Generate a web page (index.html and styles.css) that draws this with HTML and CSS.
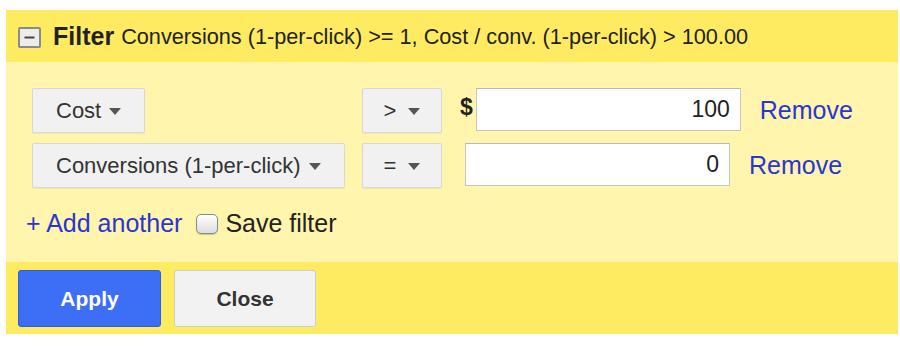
FILE: index.html
```html
<!DOCTYPE html>
<html lang="en">
<head>
    <meta charset="UTF-8">
    <meta name="viewport" content="width=device-width, initial-scale=1.0">
    <title>Filter</title>
    <link rel="stylesheet" href="styles.css">
</head>
<body>
    <div class="panel">
        <div class="panel-head">
            <span class="toggle">
                <svg width="23" height="21" viewBox="0 0 23 21">
                    <rect x="1" y="1" width="21" height="19" rx="1" fill="#ececec" stroke="#8a8a8a" stroke-width="2"/>
                    <rect x="6.5" y="9.5" width="10" height="2" fill="#444"/>
                </svg>
            </span>
            <span class="title">Filter</span>
            <span class="summary">Conversions (1-per-click) &gt;= 1, Cost / conv. (1-per-click) &gt; 100.00</span>
        </div>

        <div class="panel-body">
            <div class="cond-row">
                <div class="field-cell">
                    <button class="menu-btn">Cost <span class="caret"></span></button>
                </div>
                <button class="menu-btn op-btn">&gt; <span class="caret"></span></button>
                <div class="value-cell">
                    <span class="currency">$</span>
                    <input class="value-input" type="text" value="100">
                </div>
                <a href="#" class="link remove">Remove</a>
            </div>
            <div class="cond-row">
                <div class="field-cell">
                    <button class="menu-btn">Conversions (1-per-click) <span class="caret"></span></button>
                </div>
                <button class="menu-btn op-btn">= <span class="caret"></span></button>
                <div class="value-cell no-currency">
                    <input class="value-input" type="text" value="0">
                </div>
                <a href="#" class="link remove">Remove</a>
            </div>

            <div class="add-row">
                <a href="#" class="link">+ Add another</a>
                <label class="save">
                    <span class="check"></span>
                    Save filter
                </label>
            </div>
        </div>

        <div class="panel-foot">
            <button class="action apply">Apply</button>
            <button class="action close">Close</button>
        </div>
    </div>
</body>
</html>
```

FILE: styles.css
```css
body {
    margin: 0;
    padding: 10px 2px 0 6px;
    font-family: "Liberation Sans", Arial, sans-serif;
    color: #222;
    background: #fff;
}
.panel {
    width: 892px;
}
.panel-head {
    display: flex;
    align-items: center;
    height: 52px;
    padding-left: 12px;
    background: #ffeb62;
    white-space: nowrap;
}
.toggle {
    display: flex;
    flex-shrink: 0;
    margin-right: 12px;
    margin-top: 2px;
}
.title {
    font-weight: bold;
    font-size: 25px;
    margin-right: 7px;
}
.summary {
    font-size: 21.7px;
    padding-top: 2px;
}
.panel-body {
    background: #fff5ac;
    padding: 26px 0 25px 20px;
}
.cond-row {
    display: flex;
    align-items: center;
    height: 45px;
    margin-left: 6px;
    margin-bottom: 10px;
}
.field-cell {
    width: 330px;
    display: flex;
}
.menu-btn {
    display: flex;
    align-items: center;
    height: 45px;
    padding: 0 23px;
    border: 1px solid #d8d8d8;
    border-radius: 2px;
    background: #f1f1f1;
    font-family: inherit;
    font-size: 22px;
    color: #333;
    box-shadow: 0 1px 1px rgba(0, 0, 0, 0.05);
}
.caret {
    display: inline-block;
    width: 0;
    height: 0;
    margin-left: 8px;
    margin-top: 2px;
    border-left: 6px solid transparent;
    border-right: 6px solid transparent;
    border-top: 7px solid #555;
}
.op-btn {
    width: 80px;
    justify-content: center;
    padding: 0;
}
.op-btn .caret {
    margin-left: 12px;
}
.value-cell {
    display: flex;
    align-items: center;
    margin-left: 18px;
}
.value-cell.no-currency {
    margin-left: 23px;
}
.currency {
    font-size: 23px;
    font-weight: bold;
    margin-right: 3px;
    margin-bottom: 6px;
}
.value-input {
    width: 265px;
    height: 43px;
    box-sizing: border-box;
    border: 1px solid #c6c6c6;
    border-top-color: #b8b8b8;
    background: #fff;
    padding: 0 10px;
    text-align: right;
    font-family: inherit;
    font-size: 23px;
    color: #222;
    margin-bottom: 2px;
}
.link {
    color: #2a35d4;
    text-decoration: none;
    font-size: 25px;
}
.remove {
    margin-left: 19px;
}
.add-row {
    display: flex;
    align-items: center;
    height: 28px;
    margin-top: 21px;
}
.save {
    display: flex;
    align-items: center;
    font-size: 25px;
    margin-left: 14px;
}
.check {
    display: inline-block;
    width: 20px;
    height: 18px;
    margin: 2px 7px 0 0;
    border: 1px solid #8a8a8a;
    border-radius: 5px;
    background: linear-gradient(#fff, #dcdcdc);
    box-shadow: 0 1px 1px rgba(0, 0, 0, 0.2);
}
.panel-foot {
    display: flex;
    gap: 13px;
    height: 72px;
    box-sizing: border-box;
    padding: 8px 12px;
    background: #ffeb62;
}
.action {
    height: 57px;
    width: 143px;
    border-radius: 3px;
    font-family: inherit;
    font-weight: bold;
    font-size: 21px;
}
.apply {
    background: #3d6ff6;
    border: 1px solid #2f5ed8;
    color: #fff;
}
.close {
    width: 142px;
    background: #f2f2f2;
    border: 1px solid #cdcdcd;
    color: #333;
}
```
